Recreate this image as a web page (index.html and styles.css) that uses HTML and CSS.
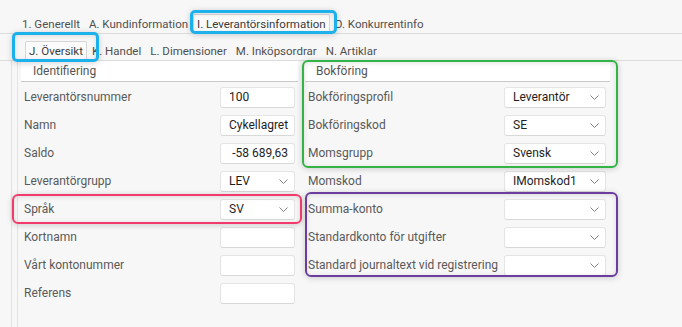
FILE: index.html
```html
<!DOCTYPE html>
<html lang="sv">
<head>
<meta charset="utf-8">
<title>Leverantörsinformation</title>
<link rel="stylesheet" href="styles.css">
</head>
<body>
<div class="page">
  <div class="tabs tabs1">
    <span class="tab">1. Generellt</span>
    <span class="tab">A. Kundinformation</span>
    <span class="tab active">I. Leverantörsinformation</span>
    <span class="tab">O. Konkurrentinfo</span>
  </div>
  <div class="tabs tabs2">
    <span class="tab active">J. Översikt</span>
    <span class="tab">K. Handel</span>
    <span class="tab">L. Dimensioner</span>
    <span class="tab">M. Inköpsordrar</span>
    <span class="tab">N. Artiklar</span>
  </div>
  <div class="frame">
    <div class="panel">
      <div class="col col-left">
        <div class="sechead">Identifiering</div>
        <div class="row"><span class="lbl">Leverantörsnummer</span><span class="inp">100</span></div>
        <div class="row"><span class="lbl">Namn</span><span class="inp">Cykellagret</span></div>
        <div class="row"><span class="lbl">Saldo</span><span class="inp num">-58 689,63</span></div>
        <div class="row"><span class="lbl">Leverantörgrupp</span><span class="inp sel">LEV<svg class="chev" width="9" height="5" viewBox="0 0 9 5"><polyline points="0.5,0.5 4.5,4.5 8.5,0.5"/></svg></span></div>
        <div class="row"><span class="lbl">Språk</span><span class="inp sel">SV<svg class="chev" width="9" height="5" viewBox="0 0 9 5"><polyline points="0.5,0.5 4.5,4.5 8.5,0.5"/></svg></span></div>
        <div class="row"><span class="lbl">Kortnamn</span><span class="inp"></span></div>
        <div class="row"><span class="lbl">Vårt kontonummer</span><span class="inp"></span></div>
        <div class="row"><span class="lbl">Referens</span><span class="inp"></span></div>
      </div>
      <div class="col col-right">
        <div class="sechead">Bokföring</div>
        <div class="row"><span class="lbl">Bokföringsprofil</span><span class="inp sel">Leverantör<svg class="chev" width="9" height="5" viewBox="0 0 9 5"><polyline points="0.5,0.5 4.5,4.5 8.5,0.5"/></svg></span></div>
        <div class="row"><span class="lbl">Bokföringskod</span><span class="inp sel">SE<svg class="chev" width="9" height="5" viewBox="0 0 9 5"><polyline points="0.5,0.5 4.5,4.5 8.5,0.5"/></svg></span></div>
        <div class="row"><span class="lbl">Momsgrupp</span><span class="inp sel">Svensk<svg class="chev" width="9" height="5" viewBox="0 0 9 5"><polyline points="0.5,0.5 4.5,4.5 8.5,0.5"/></svg></span></div>
        <div class="row"><span class="lbl">Momskod</span><span class="inp sel">IMomskod1<svg class="chev" width="9" height="5" viewBox="0 0 9 5"><polyline points="0.5,0.5 4.5,4.5 8.5,0.5"/></svg></span></div>
        <div class="row"><span class="lbl">Summa-konto</span><span class="inp sel"><svg class="chev" width="9" height="5" viewBox="0 0 9 5"><polyline points="0.5,0.5 4.5,4.5 8.5,0.5"/></svg></span></div>
        <div class="row"><span class="lbl">Standardkonto för utgifter</span><span class="inp sel"><svg class="chev" width="9" height="5" viewBox="0 0 9 5"><polyline points="0.5,0.5 4.5,4.5 8.5,0.5"/></svg></span></div>
        <div class="row"><span class="lbl">Standard journaltext vid registrering</span><span class="inp sel"><svg class="chev" width="9" height="5" viewBox="0 0 9 5"><polyline points="0.5,0.5 4.5,4.5 8.5,0.5"/></svg></span></div>
      </div>
    </div>
  </div>

  <div class="ring ring-blue ring-tab1"></div>
  <div class="ring ring-blue ring-tab2"></div>
  <div class="ring ring-green"></div>
  <div class="ring ring-pink"></div>
  <div class="ring ring-purple"></div>
</div>
</body>
</html>
```
FILE: styles.css
```css
html, body {
  margin: 0;
  padding: 0;
  background: #f7f7f7;
}
body {
  font-family: Roboto, "Liberation Sans", Arial, sans-serif;
  font-size: 12px;
  color: #5a5a5a;
  width: 682px;
  height: 327px;
  overflow: hidden;
}
.page {
  position: relative;
  height: 327px;
}

/* tabs */
.tabs {
  display: flex;
  align-items: flex-end;
  border-bottom: 1px solid #dcdcdc;
  box-sizing: border-box;
}
.tabs1 {
  height: 34px;
  padding-left: 18px;
}
.tabs2 {
  height: 27px;
  padding-left: 25px;
}
.tab {
  height: 19px;
  line-height: 18px;
  padding: 0 3px;
  margin-right: 1px;
  font-size: 11.5px;
  color: #505050;
  white-space: nowrap;
  border: 1px solid transparent;
  border-bottom: none;
  box-sizing: border-box;
}
.tabs2 .tab.active {
  padding: 0 3px 0 3px;
}
.tab.active {
  background: #fbfbfb;
  border-color: #d6d6d6;
  border-radius: 2px 2px 0 0;
  color: #3a3a3a;
}

/* frame */
.frame {
  margin-left: 11px;
  border-left: 1px solid #e2e2e2;
  height: 266px;
  box-sizing: border-box;
  padding-left: 5px;
}
.panel {
  display: flex;
  border-left: 1px solid #e4e4e4;
  height: 100%;
  padding-left: 3px;
  gap: 7px;
}
.col {
  display: flex;
  flex-direction: column;
}
.col-left { width: 277px; }
.col-right { width: 305px; }

.sechead {
  background: #ffffff;
  height: 20px;
  line-height: 20px;
  border-bottom: 1px solid #c9c9c9;
  color: #555;
  margin-bottom: 1px;
}
.col-left .sechead { padding-left: 12px; }
.col-right .sechead { padding-left: 11px; }

.row {
  height: 28px;
  display: flex;
  align-items: center;
  justify-content: space-between;
  padding-left: 3px;
}
.col-left .row { padding-right: 3px; }
.col-right .row { padding-right: 4px; }

.lbl {
  color: #5a5a5a;
  white-space: nowrap;
}
.inp {
  display: flex;
  align-items: center;
  justify-content: space-between;
  width: 75px;
  height: 21px;
  box-sizing: border-box;
  background: #fff;
  border: 1px solid #e4e4e4;
  border-bottom-color: #d8d8d8;
  border-radius: 3px;
  padding: 0 6px 0 8px;
  color: #1e1e1e;
  font-size: 12px;
  white-space: nowrap;
  overflow: hidden;
}
.col-left .inp:not(.sel):not(.num) { justify-content: flex-start; }
.num { justify-content: flex-end; }
.col-right .inp { width: 102px; }
.chev {
  margin-left: auto;
  flex: none;
}
.chev polyline {
  fill: none;
  stroke: #808080;
  stroke-width: 1;
}

/* annotation rings (overlay) */
.ring {
  position: absolute;
  box-sizing: border-box;
  border-radius: 6px;
  pointer-events: none;
  box-shadow: 0 1px 6px rgba(0, 0, 0, 0.18), inset 0 1px 5px rgba(0, 0, 0, 0.12);
}
.ring-blue {
  border: 3px solid #1cb1ea;
  border-radius: 5px;
}
.ring-tab1 { left: 190px; top: 10px; width: 147px; height: 24px; }
.ring-tab2 { left: 12px; top: 32px; width: 87px; height: 30px; }
.ring-green {
  border: 2px solid #34b447;
  left: 302px; top: 60px; width: 316px; height: 108px;
}
.ring-pink {
  border: 2px solid #f23b6c;
  left: 12px; top: 194px; width: 290px; height: 30px;
}
.ring-purple {
  border: 2px solid #6b3d9e;
  left: 305px; top: 192px; width: 313px; height: 85px;
}
```
